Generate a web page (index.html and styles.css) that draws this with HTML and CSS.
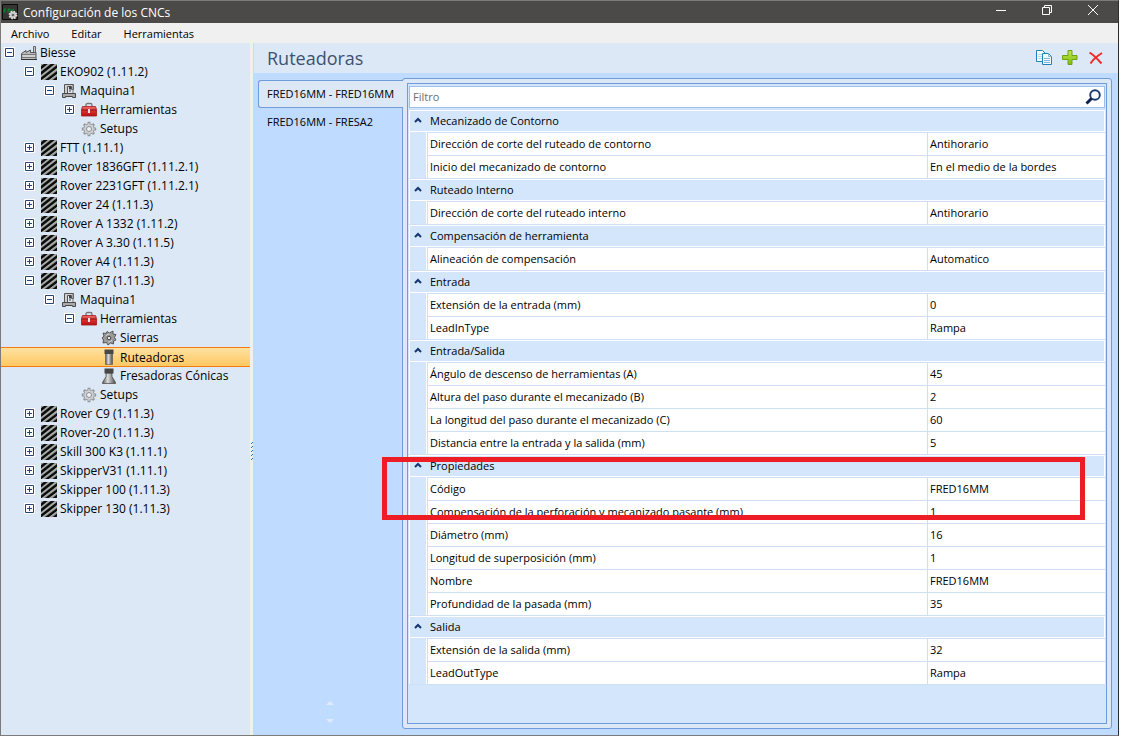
FILE: index.html
```html
<!DOCTYPE html>
<html lang="es">
<head>
  <meta charset="UTF-8" />
  <meta name="viewport" content="width=device-width, initial-scale=1.0"/>
  <title>Configuración de los CNCs</title>
  <link rel="stylesheet" href="styles.css">
</head>
<body>

  <!-- icon set -->
  <svg class="sprite" aria-hidden="true">
    <defs>
      <linearGradient id="steel" x1="0" x2="1" y1="0" y2="0">
        <stop offset="0" stop-color="#555"/><stop offset=".4" stop-color="#dcdcdc"/><stop offset="1" stop-color="#4a4a4a"/>
      </linearGradient>
      <linearGradient id="red" x1="0" x2="0" y1="0" y2="1">
        <stop offset="0" stop-color="#f0706c"/><stop offset=".5" stop-color="#dc2c2c"/><stop offset="1" stop-color="#b80f14"/>
      </linearGradient>
      <linearGradient id="green" x1="0" x2="0" y1="0" y2="1">
        <stop offset="0" stop-color="#c4e84c"/><stop offset="1" stop-color="#7dbb0c"/>
      </linearGradient>
      <symbol id="factory" viewBox="0 0 16 16">
        <path d="M12.500 7V1.500h2V7" fill="#ccc" stroke="#666"/>
        <path d="M.5 14.500V8.500L5 5.500v2L9.500 5v2.500h5.500v7z" fill="#bdbdbd" stroke="#555"/>
        <path d="M1 9.500h14M1 12.500h14" stroke="#777"/>
        <path d="M2 11h12" stroke="#e4e4e4"/>
        <path d="M0 14.500h16" stroke="#333"/>
      </symbol>
      <symbol id="cnc" viewBox="0 0 16 16">
        <path fill="#969b98" d="M0 0h16v16H0z"/>
        <path d="M-2 5.500L6-1M-2 11L13-1M-2 16.500L18 1M4 17.500L18 7M11 18l7-5.500" stroke="#0c0c0c" stroke-width="2.400"/>
        <path d="M0 6.500L8 0M0 12L15 .5M1 16.500L16 5M8 16.500L16 10.500" stroke="#c2c6c3" stroke-width=".6"/>
      </symbol>
      <symbol id="machine" viewBox="0 0 16 16">
        <path d="M3.500 11.500V1.500h9v5h-2v-3H6.500v8z" fill="#cfcfcf" stroke="#555"/>
        <path d="M8 3h2v3H8zM8.500 6h1v3h-1z" fill="#444"/>
        <path d="M12 2v9" stroke="#777"/>
        <path d="M1.500 10.500h13v4h-3v-1h-7v1h-3z" fill="#aaa" stroke="#484848"/>
      </symbol>
      <symbol id="toolbox" viewBox="0 0 16 16">
        <path d="M5 5V3Q5 1.500 6.500 1.500h3Q11 1.500 11 3v2" fill="none" stroke="#777" stroke-width="1.300"/>
        <path d="M1.500 4.500h13l1 3v6.500H.5V7.500z" fill="url(#red)" stroke="#a3191c" stroke-width=".8"/>
        <path d="M.8 8h14.400" stroke="#8a0f12"/>
        <path d="M7 7h2v4H7z" fill="#f2dede"/>
      </symbol>
      <symbol id="gear" viewBox="0 0 16 16">
        <path d="M8 .8v14.400M.8 8h14.400M2.900 2.900l10.200 10.200M13.100 2.900L2.900 13.100" stroke="#92959a" stroke-width="2.800"/>
        <circle cx="8" cy="8" r="5.200" fill="#cfd0d2" stroke="#989ba0"/>
        <path d="M8 2v12M2 8h12M3.800 3.800l8.400 8.400M12.200 3.800l-8.400 8.400" stroke="#cfd0d2" stroke-width="1.200"/>
        <circle cx="8" cy="8" r="2.500" fill="#edf2f8" stroke="#8c9095"/>
      </symbol>
      <symbol id="saw" viewBox="0 0 16 16">
        <path d="M6 1.500L8.500 3 12 1v3l3 .5L13.500 7.500 15 10l-2.500 1v3L9.500 13 7 15 5.500 12.500 2 13l.5-3L1 8l2-2-1-3 3.200.5z" fill="#9a9a9a" stroke="#4c4c4c" stroke-width=".9"/>
        <path d="M5 6q1-2 3.500-2M11 10q-1 2-3.500 2" fill="none" stroke="#d8d8d8"/>
        <circle cx="8" cy="8" r="1.800" fill="#e8e8e8" stroke="#444"/>
      </symbol>
      <symbol id="router" viewBox="0 0 16 16">
        <path d="M4.500 4h7v11.500h-7z" fill="url(#steel)" stroke="#555" stroke-width=".6"/>
        <path d="M3.500.5h9V5h-9z" fill="#484848"/>
      </symbol>
      <symbol id="cone" viewBox="0 0 16 16">
        <path d="M5 5h6v3.500l3.500 6V15.500h-13V14.500l3.500-6z" fill="url(#steel)" stroke="#444" stroke-width=".7"/>
        <path d="M3.500.5h9V5.500h-9z" fill="#484848"/>
      </symbol>
      <symbol id="minus" viewBox="0 0 11 11">
        <path d="M0 0h11v11H0z" fill="#fff"/>
        <path d="M1.500 1.500h8v8h-8zM3 5.500h5" fill="#fff" stroke="#254479"/>
      </symbol>
      <symbol id="plus" viewBox="0 0 11 11">
        <path d="M0 0h11v11H0z" fill="#fff"/>
        <path d="M1.500 1.500h8v8h-8zM3 5.500h5M5.500 3v5" fill="#fff" stroke="#254479"/>
      </symbol>
      <symbol id="chevron" viewBox="0 0 8 6">
        <path d="M1 5l3-3 3 3" fill="none" stroke="#15356e" stroke-width="2"/>
      </symbol>
    </defs>
  </svg>

  <div class="window">
    <header class="titlebar">
      <svg class="app-icon" viewBox="0 0 16 16">
        <path d="M.5.5h15v15H.5z" fill="#343534" stroke="#090909"/>
        <path d="M2 9V5h2M2 7h2M6 9V5h2v2H6M10 5v4M12 5l-2 2" fill="none" stroke="#0b8a2a"/>
        <circle cx="11" cy="11" r="3.400" fill="#c8c8c8" stroke="#ddd" stroke-width="2" stroke-dasharray="1.500 1.170"/>
        <circle cx="11" cy="11" r="1.300" fill="#666"/>
      </svg>
      <span class="title">Configuración de los CNCs</span>
      <div class="window-buttons">
        <button aria-label="Minimizar"><svg viewBox="0 0 12 12"><path d="M1 6.500h10"/></svg></button>
        <button aria-label="Restaurar"><svg viewBox="0 0 12 12"><path d="M1.500 3.500h7v7h-7zM3.500 3V1.500h7v7H9"/></svg></button>
        <button aria-label="Cerrar"><svg viewBox="0 0 12 12"><path d="M1 1l10 10M11 1L1 11"/></svg></button>
      </div>
    </header>

    <nav class="menubar">
      <button>Archivo</button>
      <button>Editar</button>
      <button>Herramientas</button>
    </nav>

    <div class="content">
      <aside class="sidebar">
        <ul class="tree" id="tree"></ul>
      </aside>
      <div class="splitter">
        <svg viewBox="0 0 3 20"><path d="M1 1.500h1M2 .5h1M1 5.500h1M2 4.500h1M1 9.500h1M2 8.500h1M1 13.500h1M2 12.500h1M1 17.500h1M2 16.500h1"/></svg>
      </div>

      <main class="main">
        <div class="main-header">
          <h1>Ruteadoras</h1>
          <div class="toolbar">
            <button aria-label="Copiar">
              <svg viewBox="0 0 18 18">
                <path d="M1.500 1.500h6l3 3v8h-9z" fill="#f4fbff" stroke="#2582b8"/>
                <path d="M3 5.500h4M3 7.500h4M3 9.500h4" stroke="#b5d8ec"/>
                <path d="M7.500 4.500h6l3 3v8h-9z" fill="#f4fbff" stroke="#2582b8"/>
                <path d="M13.500 4.500v3h3M9 9.500h6M9 11.500h6M9 13.500h6" fill="none" stroke="#79b9dc"/>
              </svg>
            </button>
            <button aria-label="Agregar">
              <svg viewBox="0 0 18 18"><path d="M7 1.500h4V6.500h5v4H11v5H7v-5H1.500v-4H7z" fill="url(#green)" stroke="#6ca312"/></svg>
            </button>
            <button aria-label="Eliminar">
              <svg viewBox="0 0 18 18"><path d="M2.500 3.500q5 3 12 11M15 4Q7 9 3.500 14.500" fill="none" stroke="#f02a2a" stroke-width="2"/></svg>
            </button>
          </div>
        </div>

        <div class="workspace">
          <div class="tabs">
            <button class="tab active">FRED16MM - FRED16MM</button>
            <button class="tab">FRED16MM - FRESA2</button>
            <div class="tab-scroll">
              <svg viewBox="0 0 8 22"><path d="M0 4l4-4 4 4zM0 18l4 4 4-4z"/></svg>
            </div>
          </div>

          <section class="panel">
            <div class="properties">
              <div class="filter">
                <input type="text" placeholder="Filtro" aria-label="Filtro">
                <svg viewBox="0 0 16 16"><circle cx="10" cy="6" r="4.800" fill="none" stroke="#1c3a72" stroke-width="1.900"/><path d="M6.500 9.500L1.500 14.500" stroke="#0e2250" stroke-width="3"/></svg>
              </div>
              <table class="grid">
                <colgroup><col class="col-gutter"><col class="col-name"><col class="col-value"></colgroup>
                <tbody id="grid"></tbody>
              </table>
            </div>
          </section>
        </div>
      </main>
    </div>

    <div class="highlight"></div>
  </div>

  <script>
    // [label, icon, children]; an empty list is a collapsed branch
    const machines = [
      ['EKO902 (1.11.2)', 'cnc', [
        ['Maquina1', 'machine', [
          ['Herramientas', 'toolbox', []],
          ['Setups', 'gear']
        ]]
      ]],
      ['FTT (1.11.1)', 'cnc', []],
      ['Rover 1836GFT (1.11.2.1)', 'cnc', []],
      ['Rover 2231GFT (1.11.2.1)', 'cnc', []],
      ['Rover 24 (1.11.3)', 'cnc', []],
      ['Rover A 1332 (1.11.2)', 'cnc', []],
      ['Rover A 3.30 (1.11.5)', 'cnc', []],
      ['Rover A4 (1.11.3)', 'cnc', []],
      ['Rover B7 (1.11.3)', 'cnc', [
        ['Maquina1', 'machine', [
          ['Herramientas', 'toolbox', [
            ['Sierras', 'saw'],
            ['Ruteadoras', 'router'],
            ['Fresadoras Cónicas', 'cone']
          ]],
          ['Setups', 'gear']
        ]]
      ]],
      ['Rover C9 (1.11.3)', 'cnc', []],
      ['Rover-20 (1.11.3)', 'cnc', []],
      ['Skill 300 K3 (1.11.1)', 'cnc', []],
      ['SkipperV31 (1.11.1)', 'cnc', []],
      ['Skipper 100 (1.11.3)', 'cnc', []],
      ['Skipper 130 (1.11.3)', 'cnc', []]
    ];

    const groups = [
      ['Mecanizado de Contorno', [
        ['Dirección de corte del ruteado de contorno', 'Antihorario'],
        ['Inicio del mecanizado de contorno', 'En el medio de la bordes']
      ]],
      ['Ruteado Interno', [
        ['Dirección de corte del ruteado interno', 'Antihorario']
      ]],
      ['Compensación de herramienta', [
        ['Alineación de compensación', 'Automatico']
      ]],
      ['Entrada', [
        ['Extensión de la entrada (mm)', '0'],
        ['LeadInType', 'Rampa']
      ]],
      ['Entrada/Salida', [
        ['Ángulo de descenso de herramientas (A)', '45'],
        ['Altura del paso durante el mecanizado (B)', '2'],
        ['La longitud del paso durante el mecanizado (C)', '60'],
        ['Distancia entre la entrada y la salida (mm)', '5']
      ]],
      ['Propiedades', [
        ['Código', 'FRED16MM'],
        ['Compensación de la perforación y mecanizado pasante (mm)', '1'],
        ['Diámetro (mm)', '16'],
        ['Longitud de superposición (mm)', '1'],
        ['Nombre', 'FRED16MM'],
        ['Profundidad de la pasada (mm)', '35']
      ]],
      ['Salida', [
        ['Extensión de la salida (mm)', '32'],
        ['LeadOutType', 'Rampa']
      ]]
    ];

    function renderNode([label, icon, children]) {
      let toggle = '<span class="toggle"></span>';
      if (children) {
        const open = children.length > 0;
        toggle = `<button class="toggle" aria-label="${label}" aria-expanded="${open}"><svg><use href="#${open ? 'minus' : 'plus'}"/></svg></button>`;
      }
      const selected = label === 'Ruteadoras' ? ' selected' : '';
      const nested = children && children.length ? `<ul>${children.map(renderNode).join('')}</ul>` : '';
      return `<li><div class="node${selected}">${toggle}<svg class="node-icon"><use href="#${icon}"/></svg><span>${label}</span></div>${nested}</li>`;
    }

    function renderGroup([name, rows]) {
      const head = `<tr class="group"><th colspan="3"><button><svg><use href="#chevron"/></svg>${name}</button></th></tr>`;
      return head + rows.map(([key, value]) =>
        `<tr><td class="gutter"></td><td>${key}</td><td>${value}</td></tr>`).join('');
    }

    document.getElementById('tree').innerHTML = renderNode(['Biesse', 'factory', machines]);
    document.getElementById('grid').innerHTML = groups.map(renderGroup).join('');
  </script>
</body>
</html>
```
FILE: styles.css
```css
* { box-sizing: border-box; }
body {
  margin: 0;
  background: #fff;
  font-family: "Open Sans", "Noto Sans", sans-serif;
  font-size: 12px;
  color: #000;
}
button {
  margin: 0;
  padding: 0;
  border: none;
  background: none;
  font: inherit;
  color: inherit;
}
svg { display: block; }
ul { margin: 0; padding: 0; list-style: none; }
.sprite { position: absolute; width: 0; height: 0; }

.window {
  position: relative;
  display: flex;
  flex-direction: column;
  min-height: calc(100vh - 4px);
  margin-right: 5px;
  border: 1px solid #7b7b7b;
  border-right-color: #2d2d2d;
}

/* title bar */
.titlebar {
  display: flex;
  align-items: center;
  height: 22px;
  padding-left: 1px;
  background: #4b4a48;
  color: #fff;
}
.app-icon { width: 16px; height: 16px; }
.title { margin-left: 5px; }
.window-buttons {
  display: flex;
  margin-left: auto;
  padding-right: 2px;
}
.window-buttons button {
  display: flex;
  align-items: center;
  justify-content: center;
  width: 46px;
  height: 22px;
}
.window-buttons svg {
  width: 12px;
  height: 12px;
  margin-bottom: 4px;
  fill: none;
  stroke: #fff;
}

.menubar {
  display: flex;
  gap: 22px;
  height: 20px;
  padding-left: 10px;
  background: #f0f0f0;
  font-size: 11px;
}

.content {
  display: flex;
  flex: 1;
}

/* tree */
.sidebar {
  width: 249px;
  flex: none;
  background: #dde8f6;
}
.node {
  display: flex;
  align-items: center;
  height: 19px;
  padding-left: 3px;
  white-space: nowrap;
}
ul ul .node { padding-left: 23px; }
ul ul ul .node { padding-left: 43px; }
ul ul ul ul .node { padding-left: 63px; }
ul ul ul ul ul .node { padding-left: 83px; }
.node.selected {
  height: 20px;
  margin-bottom: -1px;
  border: solid #f47a12;
  border-width: 1px 0;
  background: linear-gradient(#ffe1a0, #ffc964);
}
.toggle,
.toggle svg {
  width: 11px;
  height: 11px;
}
.node-icon {
  width: 16px;
  height: 16px;
  margin: 0 3px 0 6px;
}

.splitter {
  display: flex;
  align-items: center;
  width: 3px;
  flex: none;
  background: #f0f0f0;
}
.splitter svg {
  width: 3px;
  height: 20px;
  margin-top: 126px;
  stroke: #2a6ac8;
}

/* main area */
.main {
  display: flex;
  flex: 1;
  flex-direction: column;
  min-width: 0;
  background: #bfdbff;
}
.main-header {
  display: flex;
  align-items: center;
  justify-content: space-between;
  height: 30px;
  padding: 0 13px;
  border-left: 1px solid #bfdbff;
  background: #dde8f6;
}
h1 {
  margin: 0;
  font-size: 18px;
  font-weight: normal;
  color: #3b5274;
}
.toolbar { display: flex; gap: 8px; }
.toolbar svg { width: 18px; height: 18px; }

.workspace {
  display: flex;
  flex: 1;
  padding: 5px 6px 6px 5px;
}
.tabs {
  display: flex;
  flex-direction: column;
  width: 144px;
  flex: none;
  padding-top: 2px;
  font-size: 11px;
}
.tab {
  height: 28px;
  padding: 0 0 2px 8px;
  border: 1px solid transparent;
  text-align: left;
  white-space: nowrap;
}
.tab.active {
  z-index: 1;
  margin-right: -1px;
  border-color: #6f9bd8;
  border-right: none;
  border-radius: 3px 0 0 3px;
  background: #dde8f6;
}
.tab-scroll {
  display: flex;
  justify-content: center;
  margin-top: auto;
  padding-bottom: 6px;
}
.tab-scroll svg {
  width: 8px;
  height: 22px;
  fill: #dfeaff;
}
.panel {
  display: flex;
  flex: 1;
  min-width: 0;
  padding: 4px;
  border: 1px solid #6f9bd8;
  border-radius: 3px;
  background: #dde8f6;
}
.properties {
  flex: 1;
  min-width: 0;
  padding: 2px 1px;
  border: 1px solid #6f9bd8;
  background: #d4e6fc;
}

/* filter box */
.filter {
  display: flex;
  align-items: center;
  height: 22px;
  padding: 0 3px;
  border: 1px solid #9dbfea;
  background: #fff;
}
.filter input {
  flex: 1;
  min-width: 0;
  padding: 0 0 2px;
  border: none;
  outline: none;
  background: none;
  font: inherit;
  font-size: 11px;
}
.filter input::placeholder { color: #6d6d6d; opacity: 1; }
.filter svg { width: 16px; height: 16px; }

/* property grid */
.grid {
  width: 100%;
  margin-top: 1px;
  border-collapse: separate;
  border-spacing: 0;
  table-layout: fixed;
  border-bottom: 1px solid #cfdff5;
  font-size: 11px;
}
.col-gutter { width: 18px; }
.col-name { width: 500px; }
.grid th,
.grid td {
  height: 23px;
  padding: 0 2px 2px;
  border-top: 1px solid #cfdff5;
  white-space: nowrap;
}
.grid td {
  border-left: 1px solid #cfdff5;
  background: #fff;
}
.grid td.gutter {
  border-top: none;
  border-left: 1px solid #fff;
  border-right: 1px solid #fff;
  background: #d4e6fc;
}
.grid th {
  padding: 0;
  font-weight: normal;
  text-align: left;
}
.grid th button {
  display: flex;
  align-items: center;
  width: 100%;
  height: 22px;
  padding: 0 0 2px 4px;
  border: 1px solid #fff;
}
.grid th svg {
  width: 8px;
  height: 6px;
  margin-right: 8px;
}

/* red marker over the code row */
.highlight {
  position: absolute;
  top: 456px;
  left: 381px;
  right: 33px;
  height: 63px;
  border: 5px solid #ee1c25;
  pointer-events: none;
}
```
